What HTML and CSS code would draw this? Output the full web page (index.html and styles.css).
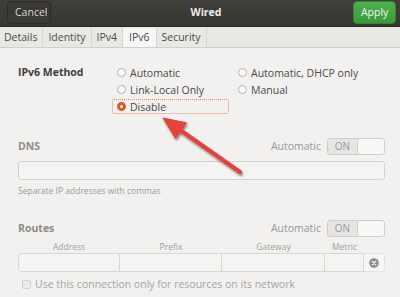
FILE: index.html
```html
<!DOCTYPE html>
<html>
<head>
<meta charset="utf-8">
<link rel="stylesheet" href="styles.css">
</head>
<body>
<div class="window">
  <div class="header">
    <button class="btn cancel">Cancel</button>
    <div class="title">Wired</div>
    <button class="btn apply">Apply</button>
  </div>
  <div class="tabs">
    <div class="tab">Details</div>
    <div class="tab">Identity</div>
    <div class="tab">IPv4</div>
    <div class="tab active">IPv6</div>
    <div class="tab">Security</div>
    <div class="tab-fill"></div>
  </div>
  <div class="content">
    <div class="method">
      <div class="method-label">IPv6 Method</div>
      <div class="radios">
        <div class="radio"><span class="dot"></span>Automatic</div>
        <div class="radio"><span class="dot"></span>Automatic, DHCP only</div>
        <div class="radio"><span class="dot"></span>Link-Local Only</div>
        <div class="radio"><span class="dot"></span>Manual</div>
        <div class="radio focus"><span class="dot on"></span>Disable</div>
      </div>
    </div>

    <div class="section-head dns-head">
      <div class="section-title">DNS</div>
      <div class="auto">Automatic</div>
      <div class="switch"><span class="on-text">ON</span><span class="knob"></span></div>
    </div>
    <div class="entry"></div>
    <div class="hint">Separate IP addresses with commas</div>

    <div class="section-head routes-head">
      <div class="section-title">Routes</div>
      <div class="auto">Automatic</div>
      <div class="switch"><span class="on-text">ON</span><span class="knob"></span></div>
    </div>
    <div class="cols">
      <div class="col c-addr">Address</div>
      <div class="col c-prefix">Prefix</div>
      <div class="col c-gw">Gateway</div>
      <div class="col c-metric">Metric</div>
      <div class="col c-del"></div>
    </div>
    <div class="route-row">
      <div class="cell c-addr"></div>
      <div class="cell c-prefix"></div>
      <div class="cell c-gw"></div>
      <div class="cell c-metric"></div>
      <div class="cell c-del">
        <svg width="10" height="10" viewBox="0 0 11 11"><circle cx="5.5" cy="5.5" r="5.3" fill="#8a8a88"/><path d="M3.6 3.6 L7.4 7.4 M7.4 3.6 L3.6 7.4" stroke="#eeeeec" stroke-width="1.6" stroke-linecap="round"/></svg>
      </div>
    </div>
    <div class="check-row"><span class="checkbox"></span>Use this connection only for resources on its network</div>
  </div>

  <svg class="arrow" width="400" height="297" viewBox="0 0 400 297">
    <defs>
      <filter id="sh" x="-20%" y="-20%" width="140%" height="140%">
        <feGaussianBlur in="SourceAlpha" stdDeviation="1.2"/>
        <feOffset dx="1" dy="1.5" result="b"/>
        <feComponentTransfer><feFuncA type="linear" slope="0.45"/></feComponentTransfer>
        <feMerge><feMergeNode/><feMergeNode in="SourceGraphic"/></feMerge>
      </filter>
    </defs>
    <g filter="url(#sh)">
      <line x1="240" y1="172" x2="178" y2="128.5" stroke="#e4433b" stroke-width="4.2" stroke-linecap="round"/>
      <polygon points="163,118 175.5,138.5 186.5,122.8" fill="#e4433b" stroke="#e4433b" stroke-width="1" stroke-linejoin="round"/>
    </g>
  </svg>
</div>
</body>
</html>
```
FILE: styles.css
```css
* { box-sizing: border-box; }
html, body { margin: 0; padding: 0; }
body {
  width: 400px;
  height: 297px;
  overflow: hidden;
  font-family: "Open Sans", "Noto Sans", sans-serif;
  background: #f2f1f0;
}
.window {
  position: relative;
  width: 400px;
  height: 297px;
  display: flex;
  flex-direction: column;
  background: #f2f1f0;
}
.header {
  height: 27px;
  display: flex;
  align-items: center;
  justify-content: space-between;
  padding: 0 4px 2px 7px;
  background: linear-gradient(#403f3b, #37362f);
  border-bottom: 1px solid #2a2926;
}
.btn {
  font-family: inherit;
  font-size: 10.5px;
  height: 23px;
  border-radius: 4px;
  padding: 0 7px;
  margin: 0;
}
.cancel {
  width: 44px;
  color: #d8d7d3;
  background: #3a3935;
  border: 1px solid #2b2a27;
}
.apply {
  width: 43px;
  color: #eef7ee;
  background: linear-gradient(#4cb04c, #3b9a3b);
  border: 1px solid #2f872f;
}
.title {
  color: #eeeeec;
  font-weight: bold;
  font-size: 10.5px;
  padding-left: 8px;
}
.tabs {
  height: 21px;
  display: flex;
  background: #e9e8e5;
  border-bottom: 1px solid #d0cfcc;
}
.tab {
  font-size: 10.5px;
  color: #4c4c4c;
  padding: 0 5px;
  line-height: 20px;
  border-right: 1px solid #d6d5d2;
}
.tab:first-child { padding-left: 4px; }
.tab.active {
  background: #f6f6f5;
  border-left: 1px solid #d6d5d2;
  margin-left: -1px;
  margin-top: 1px;
  line-height: 19px;
  padding: 0 6px;
}
.tab-fill { flex: 1; }
.content {
  padding: 16px 15px 0 18px;
  display: flex;
  flex-direction: column;
}
.method {
  display: flex;
  height: 51px;
}
.method-label {
  width: 99px;
  font-size: 10.5px;
  font-weight: bold;
  color: #3d3d3d;
  line-height: 17px;
}
.radios {
  display: grid;
  grid-template-columns: 121px auto;
  grid-auto-rows: 17px;
}
.radio {
  display: flex;
  align-items: center;
  font-size: 10.5px;
  color: #4a4a4a;
  white-space: nowrap;
}
.dot {
  width: 9px;
  height: 9px;
  border-radius: 50%;
  border: 1px solid #b3b3b1;
  background: #fbfbfb;
  margin-right: 4px;
  flex: none;
}
.dot.on {
  background: #fff;
  border: 3px solid #df5a24;
}
.radio.focus {
  margin-left: -5px;
  width: 117px;
  height: 15px;
  padding-left: 4px;
  border: 1px dotted #e98a6a;
  border-radius: 2px;
  align-self: center;
}
.section-head {
  display: flex;
  align-items: center;
  height: 18px;
}
.dns-head { margin-top: 22px; }
.routes-head { margin-top: 22px; }
.section-title {
  flex: 1;
  font-size: 10.5px;
  font-weight: bold;
  color: #8e8c89;
}
.auto {
  font-size: 10.5px;
  color: #9a9896;
  margin-right: 6px;
}
.switch {
  width: 58px;
  height: 17px;
  display: flex;
  border: 1px solid #cfcecb;
  border-radius: 3px;
  background: #e6e5e3;
  overflow: hidden;
}
.on-text {
  width: 29px;
  text-align: center;
  font-size: 10px;
  color: #9a9896;
  line-height: 15px;
}
.knob {
  flex: 1;
  background: #f8f8f7;
  border-left: 1px solid #cfcecb;
  border-radius: 3px;
}
.entry {
  margin-top: 6px;
  height: 19px;
  border: 1px solid #d3d2cf;
  border-radius: 3px;
  background: #f4f4f3;
}
.hint {
  font-size: 8.5px;
  color: #9c9a98;
  margin-top: 5px;
  line-height: 12px;
}
.cols {
  display: flex;
  margin-top: 3px;
  height: 13px;
}
.col {
  font-size: 8.5px;
  color: #a09e9c;
  text-align: center;
  line-height: 13px;
}
.c-addr { width: 102px; }
.c-prefix { width: 102px; }
.c-gw { width: 103px; }
.c-metric { width: 39px; }
.c-del { width: 21px; }
.route-row {
  display: flex;
  height: 19px;
}
.cell {
  border: 1px solid #d8d7d4;
  border-left: none;
  background: #f4f4f3;
}
.cell.c-addr {
  border-left: 1px solid #d8d7d4;
  border-radius: 3px 0 0 3px;
}
.cell.c-del {
  border-color: #e4e3e0;
  background: #f6f6f5;
  border-radius: 0 3px 3px 0;
  display: flex;
  align-items: center;
  justify-content: center;
}
.check-row {
  display: flex;
  align-items: center;
  margin-top: 5px;
  margin-left: 4px;
  font-size: 10.5px;
  color: #a7a5a2;
  height: 14px;
}
.checkbox {
  width: 9px;
  height: 9px;
  border: 1px solid #d3d2cf;
  border-radius: 2px;
  background: #ecebe9;
  margin-right: 4px;
}
.arrow {
  position: absolute;
  left: 0;
  top: 0;
  pointer-events: none;
}
```
